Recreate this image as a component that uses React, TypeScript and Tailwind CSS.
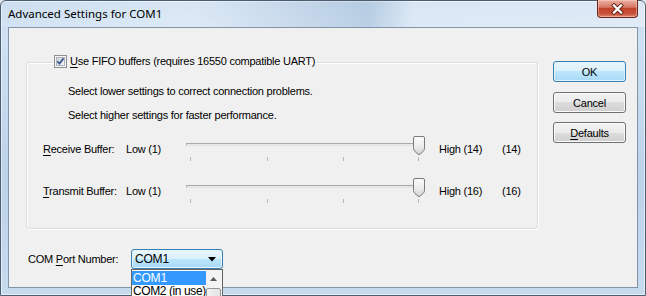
import React from "react";

const uiText =
  "font-['Liberation_Sans',Arial,sans-serif] text-[11px] leading-[14px] tracking-[-0.24px] text-black";

const Key = ({ children }: { children: React.ReactNode }) => (
  <span className="underline underline-offset-[2px] decoration-[1px]">{children}</span>
);

const CheckBox = () => (
  <svg width="13" height="13" viewBox="0 0 13 13" className="shrink-0">
    <defs>
      <linearGradient id="cbFill" x1="0" y1="0" x2="1" y2="1">
        <stop offset="0" stopColor="#cdd3db" />
        <stop offset="1" stopColor="#f6f7f8" />
      </linearGradient>
    </defs>
    <rect x="0.5" y="0.5" width="12" height="12" fill="#f5f5f5" stroke="#8e8f8f" />
    <rect x="2.5" y="2.5" width="8" height="8" fill="url(#cbFill)" stroke="#aeb4bb" />
    <path d="M3.3 6.3 L5.4 8.6 L9.6 3.4" fill="none" stroke="#3b5690" strokeWidth="1.7" />
  </svg>
);

const Thumb = () => (
  <svg width="12" height="19" viewBox="0 0 12 19" className="absolute top-0 left-[227px]">
    <defs>
      <linearGradient id="thumbFill" x1="0" y1="0" x2="0" y2="1">
        <stop offset="0" stopColor="#fcfcfc" />
        <stop offset="0.5" stopColor="#ededed" />
        <stop offset="1" stopColor="#d2d2d2" />
      </linearGradient>
    </defs>
    <path
      d="M2 0.5 H10 Q11.5 0.5 11.5 2 V12.5 Q11.5 14 10 15.5 L7.2 18 Q6 19 4.8 18 L2 15.5 Q0.5 14 0.5 12.5 V2 Q0.5 0.5 2 0.5 Z"
      fill="url(#thumbFill)"
      stroke="#7a7a7a"
    />
  </svg>
);

const ticks = ["left-[4px]", "left-[81px]", "left-[157px]", "left-[232px]"];

const Slider = () => (
  <div className="relative w-[253px] h-[26px] shrink-0">
    <div className="absolute left-0 top-[7px] w-[239px] h-[3px] border border-[#a9a9a9] border-b-[#e4e4e4] bg-[#e9e9e9] rounded-[1px]" />
    {ticks.map((t) => (
      <div key={t} className={`absolute top-[21px] w-px h-[4px] bg-[#b8b8b8] ${t}`} />
    ))}
    <Thumb />
  </div>
);

const BufferRow = ({
  label,
  high,
  value,
  className,
}: {
  label: React.ReactNode;
  high: string;
  value: string;
  className: string;
}) => (
  <div className={`flex items-start h-[26px] pl-[16px] ${className}`}>
    <span className="w-[83px] mt-[6px] shrink-0 whitespace-nowrap">{label}</span>
    <span className="w-[60px] mt-[6px] shrink-0 whitespace-nowrap">Low (1)</span>
    <Slider />
    <span className="w-[63px] mt-[6px] shrink-0 whitespace-nowrap">{high}</span>
    <span className="mt-[6px] whitespace-nowrap">{value}</span>
  </div>
);

const DialogButton = ({
  children,
  primary,
  className,
}: {
  children: React.ReactNode;
  primary?: boolean;
  className?: string;
}) => (
  <button
    type="button"
    className={`w-[73px] h-[21px] rounded-[3px] border flex items-center justify-center ${
      primary
        ? "border-[#3c7fb1] bg-[linear-gradient(#eaf6fd_0%,#d9f0fc_50%,#bee6fd_50%,#a7d9f5_100%)] shadow-[inset_0_0_0_1px_#dff3fd]"
        : "border-[#707070] bg-[linear-gradient(#f2f2f2_0%,#ebebeb_50%,#dddddd_50%,#cfcfcf_100%)] shadow-[inset_0_0_0_1px_#fbfbfb]"
    } ${className ?? ""}`}
  >
    {children}
  </button>
);

const CloseButton = () => (
  <div className="-mt-px w-[41px] h-[18px] rounded-b-[4px] border border-t-0 border-[#6a241a] bg-[linear-gradient(#ebb0a2_0%,#d67a66_42%,#c2432b_50%,#c8503a_80%,#e08a6f_100%)] shadow-[inset_0_0_0_1px_rgba(255,220,210,0.45)] flex items-center justify-center">
    <svg width="15" height="12" viewBox="0 0 15 12">
      <path d="M4 2.5 L11 9.5 M11 2.5 L4 9.5" stroke="#5e1d14" strokeWidth="4" strokeLinecap="square" />
      <path d="M4 2.5 L11 9.5 M11 2.5 L4 9.5" stroke="#ffffff" strokeWidth="2.3" strokeLinecap="square" />
    </svg>
  </div>
);

const PortSelect = () => (
  <div className="relative w-[92px] h-[20px] shrink-0">
    <div className="h-full rounded-[3px] border border-[#3c7fb1] bg-[linear-gradient(#eaf6fd_0%,#d9f0fc_50%,#bee6fd_50%,#a7d9f5_100%)] shadow-[inset_0_0_0_1px_#e3f4fc] flex items-center pl-[3px] pr-[6px]">
      <span className="flex-1 text-[12px] tracking-[-0.2px]">COM1</span>
      <svg width="8" height="5" viewBox="0 0 8 5">
        <path d="M0 0 H8 L4 4.5 Z" fill="#000" />
      </svg>
    </div>

    {/* open list */}
    <div className="absolute left-0 top-[20px] w-[92px] h-[40px] bg-white border border-[#646464] flex z-10">
      <div className="flex-1 pt-px">
        <div className="h-[14px] leading-[14px] bg-[#3399ff] text-white pl-px text-[12px] tracking-[-0.2px]">COM1</div>
        <div className="h-[13px] leading-[13px] pl-px text-[12px] tracking-[-0.4px] whitespace-nowrap">COM2 (in use)</div>
      </div>
      <div className="w-[17px] bg-[#f3f3f3] flex flex-col items-center">
        <div className="h-[17px] w-full flex items-center justify-center">
          <svg width="7" height="4" viewBox="0 0 7 4">
            <path d="M0 4 L3.5 0 L7 4 Z" fill="#5a5a5a" />
          </svg>
        </div>
        <div className="mt-px w-[15px] h-[20px] rounded-[2px] border border-[#979797] bg-[linear-gradient(90deg,#f3f3f3,#e2e2e2)]" />
      </div>
    </div>
  </div>
);

const App = () => {
  return (
    <div className="w-[646px] h-[296px] overflow-hidden bg-[#dfe6ee]">
      <div
        className={`w-[646px] h-[296px] rounded-t-[6px] border border-[#4b5d70] bg-[linear-gradient(180deg,#c3d8ee_0%,#cfe1f3_12%,#bcd2e9_60%,#c7dbef_100%)] shadow-[inset_0_0_0_1px_rgba(255,255,255,0.55)] flex flex-col ${uiText}`}
      >
        {/* title bar */}
        <div className="h-[26px] flex items-start justify-between pl-[7px] pr-[7px] rounded-t-[5px] bg-[linear-gradient(90deg,rgba(255,255,255,0.15)_0%,rgba(255,255,255,0.35)_30%,rgba(140,165,190,0.25)_57%,rgba(255,255,255,0.35)_64%,rgba(255,255,255,0.4)_100%)]">
          <span className="mt-[5px] font-['Noto_Sans',sans-serif] text-[11.5px] leading-[16px] tracking-normal">
            Advanced Settings for COM1
          </span>
          <CloseButton />
        </div>

        {/* client area */}
        <div className="mx-[7px] h-[261px] border border-[#8194a9] bg-[#f0f0f0] flex">
          <div className="w-[529px] flex flex-col">
            <fieldset className="ml-[17px] mt-[26px] w-[512px] h-[175px] border border-[#d5dfe5] rounded-[3px] shadow-[inset_1px_1px_0_#ffffff,1px_1px_0_#ffffff]">
              <legend className="ml-[25px] px-[2px]">
                <span className="inline-flex items-center gap-[3px] h-[14px]">
                  <CheckBox />
                  <span className="whitespace-nowrap">
                    <Key>U</Key>se FIFO buffers (requires 16550 compatible UART)
                  </span>
                </span>
              </legend>
              <p className="mt-[13px] pl-[41px]">Select lower settings to correct connection problems.</p>
              <p className="mt-[10px] pl-[41px]">Select higher settings for faster performance.</p>
              <BufferRow
                className="mt-[14px]"
                label={
                  <>
                    <Key>R</Key>eceive Buffer:
                  </>
                }
                high="High (14)"
                value="(14)"
              />
              <BufferRow
                className="mt-[16px]"
                label={
                  <>
                    <Key>T</Key>ransmit Buffer:
                  </>
                }
                high="High (16)"
                value="(16)"
              />
            </fieldset>

            {/* port number */}
            <div className="mt-[20px] pl-[19px] h-[20px] flex items-center">
              <span className="w-[103px] whitespace-nowrap">
                COM <Key>P</Key>ort Number:
              </span>
              <PortSelect />
            </div>
          </div>

          {/* buttons */}
          <div className="ml-[15px] mt-[33px] flex flex-col">
            <DialogButton primary>OK</DialogButton>
            <DialogButton className="mt-[10px]">Cancel</DialogButton>
            <DialogButton className="mt-[9px]">
              <span>
                <Key>D</Key>efaults
              </span>
            </DialogButton>
          </div>
        </div>
      </div>
    </div>
  );
};

export default App;
